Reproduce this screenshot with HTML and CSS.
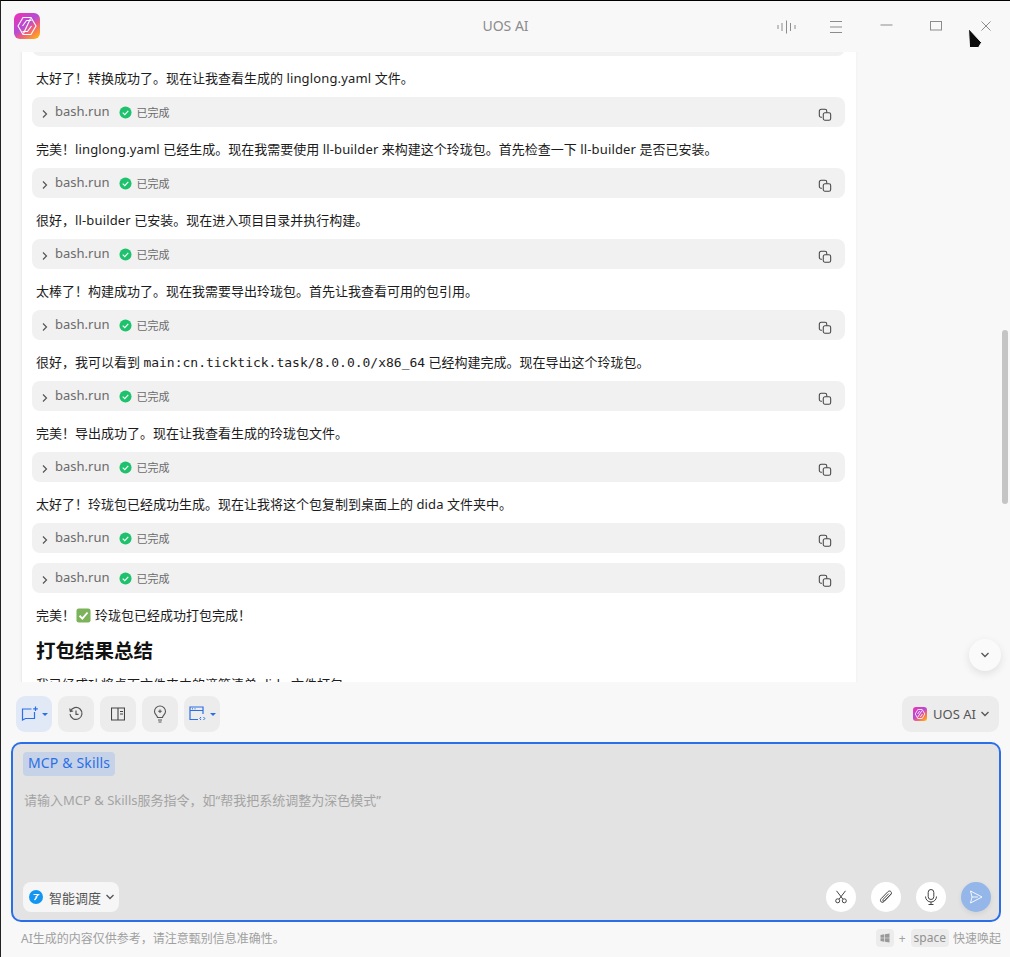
FILE: index.html
```html
<!DOCTYPE html>
<html lang="zh-CN">
<head>
<meta charset="utf-8">
<title>UOS AI</title>
<link rel="stylesheet" href="styles.css">
</head>
<body>
<svg class="sprites" width="0" height="0" aria-hidden="true">
  <defs>
    <symbol id="chev" viewBox="0 0 10 10"><path d="M3 1.500 6.500 5 3 8.500" fill="none" stroke="currentColor" stroke-width="1.200"/></symbol>
    <symbol id="down" viewBox="0 0 10 10"><path d="M1.500 3 5 6.500 8.500 3" fill="none" stroke="currentColor" stroke-width="1.300"/></symbol>
    <symbol id="ok" viewBox="0 0 14 14"><circle cx="7" cy="7" r="6.500" fill="#1fc26c"/><path d="M4 7.200 6.200 9.300 10 5.200" fill="none" stroke="#fff" stroke-width="1.200"/></symbol>
    <symbol id="copy" viewBox="0 0 16 16"><path d="M4.500 10.500H3.500A2 2 0 0 1 1.500 8.500V3.500A2 2 0 0 1 3.500 1.500H8A2 2 0 0 1 10 3.500V5" fill="none" stroke="currentColor" stroke-width="1.200"/><rect x="6" y="5.500" width="8.500" height="8.500" rx="2" fill="none" stroke="currentColor" stroke-width="1.200"/></symbol>
  </defs>
</svg>
<div class="window">
  <header class="titlebar">
    <svg class="logo" viewBox="0 0 26 26" width="26" height="26">
      <defs><linearGradient id="lg" x1="0" y1="0" x2=".8" y2="1"><stop offset="0" stop-color="#f42fb2"/><stop offset=".5" stop-color="#b54cd6"/><stop offset=".68" stop-color="#ee5a82"/><stop offset="1" stop-color="#ffa81a"/></linearGradient></defs>
      <rect width="26" height="26" rx="6" fill="url(#lg)"/>
      <path d="M9 4.500H17L22 13 17 21.500H9L4 13ZM8.500 13 12.500 7.500H17.500M17.500 13 13.500 18.500H8.500M9.500 20.500 16.500 5.500" fill="none" stroke="#fff" stroke-width="1.100" stroke-linejoin="round"/>
    </svg>
    <div class="app-title">UOS AI</div>
    <div class="win-controls">
      <svg class="ctl ctl-wave" viewBox="0 0 20 14" width="20" height="14"><path d="M1 5v4M5 3v8M9.500 .5v13M13.500 3v8M18 5v4" stroke="#8c8c8c" fill="none"/></svg>
      <svg class="ctl ctl-menu" viewBox="0 0 14 12" width="14" height="12"><path d="M1 .5h12M1 6h12M1 11.500h12" stroke="#8c8c8c" fill="none"/></svg>
      <svg class="ctl ctl-min" viewBox="0 0 14 2" width="14" height="2"><path d="M1.500 1h12" stroke="#8c8c8c" fill="none"/></svg>
      <svg class="ctl ctl-max" viewBox="0 0 12 10" width="12" height="10"><rect x=".5" y=".5" width="11" height="8.500" fill="none" stroke="#8c8c8c"/></svg>
      <svg class="ctl ctl-close" viewBox="0 0 10 10" width="10" height="10"><path d="M.5 .5 9.500 9.500M9.500 .5 .5 9.500" stroke="#8c8c8c" fill="none"/></svg>
    </div>
  </header>

  <main class="chat">
    <div class="card">
      <div class="tool tool-first"></div>
      <p class="msg">太好了&#65281;转换成功了。现在让我查看生成的 <span class="lat">linglong.yaml</span> 文件。</p>
      <div class="tool"><svg class="chev"><use href="#chev"/></svg><span class="tool-name">bash.run</span><svg class="ok"><use href="#ok"/></svg><span class="tool-state">已完成</span><svg class="copy"><use href="#copy"/></svg></div>
      <p class="msg">完美&#65281;<span class="lat">linglong.yaml</span> 已经生成。现在我需要使用 <span class="lat">ll-builder</span> 来构建这个玲珑包。首先检查一下 <span class="lat">ll-builder</span> 是否已安装。</p>
      <div class="tool"><svg class="chev"><use href="#chev"/></svg><span class="tool-name">bash.run</span><svg class="ok"><use href="#ok"/></svg><span class="tool-state">已完成</span><svg class="copy"><use href="#copy"/></svg></div>
      <p class="msg">很好&#65292;<span class="lat">ll-builder</span> 已安装。现在进入项目目录并执行构建。</p>
      <div class="tool"><svg class="chev"><use href="#chev"/></svg><span class="tool-name">bash.run</span><svg class="ok"><use href="#ok"/></svg><span class="tool-state">已完成</span><svg class="copy"><use href="#copy"/></svg></div>
      <p class="msg">太棒了&#65281;构建成功了。现在我需要导出玲珑包。首先让我查看可用的包引用。</p>
      <div class="tool"><svg class="chev"><use href="#chev"/></svg><span class="tool-name">bash.run</span><svg class="ok"><use href="#ok"/></svg><span class="tool-state">已完成</span><svg class="copy"><use href="#copy"/></svg></div>
      <p class="msg">很好&#65292;我可以看到 <code>main:cn.ticktick.task/8.0.0.0/x86_64</code> 已经构建完成。现在导出这个玲珑包。</p>
      <div class="tool"><svg class="chev"><use href="#chev"/></svg><span class="tool-name">bash.run</span><svg class="ok"><use href="#ok"/></svg><span class="tool-state">已完成</span><svg class="copy"><use href="#copy"/></svg></div>
      <p class="msg">完美&#65281;导出成功了。现在让我查看生成的玲珑包文件。</p>
      <div class="tool"><svg class="chev"><use href="#chev"/></svg><span class="tool-name">bash.run</span><svg class="ok"><use href="#ok"/></svg><span class="tool-state">已完成</span><svg class="copy"><use href="#copy"/></svg></div>
      <p class="msg">太好了&#65281;玲珑包已经成功生成。现在让我将这个包复制到桌面上的 <span class="lat">dida</span> 文件夹中。</p>
      <div class="tool"><svg class="chev"><use href="#chev"/></svg><span class="tool-name">bash.run</span><svg class="ok"><use href="#ok"/></svg><span class="tool-state">已完成</span><svg class="copy"><use href="#copy"/></svg></div>
      <div class="tool tool-next"><svg class="chev"><use href="#chev"/></svg><span class="tool-name">bash.run</span><svg class="ok"><use href="#ok"/></svg><span class="tool-state">已完成</span><svg class="copy"><use href="#copy"/></svg></div>
      <p class="msg msg-done">完美&#65281;<svg class="emoji" viewBox="0 0 16 16" width="15" height="15"><rect x=".5" y=".5" width="15" height="15" rx="2.500" fill="#7cb35a"/><path d="M3.800 8.300 6.800 11.300 12.300 4.800" fill="none" stroke="#fff" stroke-width="2"/></svg>玲珑包已经成功打包完成&#65281;</p>
      <h2 class="summary">打包结果总结</h2>
      <p class="msg msg-cut">我已经成功将桌面文件夹中的滴答清单 <span class="lat">dida</span> 文件打包。</p>
    </div>
    <div class="scrollbar"></div>
    <button class="to-bottom"><svg width="10" height="10"><use href="#down"/></svg></button>
  </main>

  <div class="toolbar">
    <button class="tbtn tbtn-active">
      <svg viewBox="0 0 18 16" width="18" height="16"><path d="M10.500 3H1.500V14L4.500 12.500H13.500V6M14.500 .5V5M12.200 2.800H16.800" fill="none" stroke="#2b6fe8" stroke-width="1.200"/></svg>
      <i class="caret caret-blue"></i>
    </button>
    <button class="tbtn">
      <svg viewBox="0 0 16 16" width="16" height="16"><path d="M2.400 5.200A6 6 0 1 1 2 8M1.800 2.500 2.400 5.500 5.200 5M8 4.500V8.300L10.500 8.300" fill="none" stroke="#555" stroke-width="1.200"/></svg>
    </button>
    <button class="tbtn">
      <svg viewBox="0 0 14 14" width="14" height="14"><path d="M.5 1H13.500V13H.5ZM7 1V13" fill="none" stroke="#444" stroke-width="1.100"/><path d="M9 4.500H12M9 7H12" stroke="#444"/></svg>
    </button>
    <button class="tbtn">
      <svg viewBox="0 0 14 18" width="14" height="18"><path d="M4.500 12.500C4.500 10.500 1.500 9.500 1.500 6.500A5.500 5.500 0 0 1 12.500 6.500C12.500 9.500 9.500 10.500 9.500 12.500ZM5 15H9M5.500 17H8.500M7 4.500V8M5.200 6.300H8.800" fill="none" stroke="#555" stroke-width="1.100"/></svg>
    </button>
    <button class="tbtn">
      <svg viewBox="0 0 18 16" width="18" height="16"><path d="M9 13.500H1V1H14V8M1 4.500H14" fill="none" stroke="#2b6fe8" stroke-width="1.200"/><path d="M3 2.800H4M5.500 2.800H6.500M12 11 10.800 12.500 12 14M14.500 11 15.800 12.500 14.500 14" fill="none" stroke="#2b6fe8"/></svg>
      <i class="caret caret-blue"></i>
    </button>
    <button class="model">
      <svg class="model-logo" viewBox="0 0 14 14" width="14" height="14"><rect width="14" height="14" rx="3" fill="url(#lg)"/><path d="M4.800 2.500H9.200L11.800 7 9.200 11.500H4.800L2.200 7ZM4.500 10.500 9 3.500M4.600 7 6.700 4M9.400 7 7.300 10" fill="none" stroke="#fff" stroke-width=".8"/></svg>
      <span>UOS AI</span>
      <svg width="10" height="10"><use href="#down"/></svg>
    </button>
  </div>

  <section class="composer">
    <div class="tag-row"><span class="tag">MCP &amp; Skills</span></div>
    <div class="placeholder">请输入MCP &amp; Skills服务指令&#65292;如&#8220;帮我把系统调整为深色模式&#8221;</div>
    <div class="composer-foot">
      <button class="agent">
        <svg viewBox="0 0 14 14" width="14" height="14"><circle cx="7" cy="7" r="7" fill="#1296f2"/><path d="M4.500 4.500H9.500L6.500 7.500M8 7 5.500 10" fill="none" stroke="#fff" stroke-width="1.200"/></svg>
        <span>智能调度</span>
        <svg class="agent-down" width="10" height="10"><use href="#down"/></svg>
      </button>
      <div class="actions">
        <button class="round"><svg viewBox="0 0 14 14" width="14" height="14"><path d="M2.500 .8 8.800 9M11.500 .8 5.200 9" fill="none" stroke="#444"/><circle cx="3.700" cy="10.800" r="2" fill="none" stroke="#444"/><circle cx="10.300" cy="10.800" r="2" fill="none" stroke="#444"/></svg></button>
        <button class="round"><svg viewBox="0 0 14 14" width="14" height="14"><path d="M12.500 3.500 5 11.500C3.800 12.800 2 12.300 1.600 11.200 1.200 10 1.600 9.200 2.300 8.500L8.800 1.800C10 .6 11.400 1 12 1.700 12.700 2.600 12.500 3.700 11.800 4.400L5.500 10.800C4.900 11.300 4.200 11.100 4 10.700 3.700 10.200 3.900 9.700 4.300 9.200L9.800 3.600" fill="none" stroke="#444"/></svg></button>
        <button class="round"><svg viewBox="0 0 14 16" width="14" height="16"><rect x="4.200" y=".5" width="5.600" height="10" rx="2.800" fill="none" stroke="#444"/><path d="M1.500 7.500A5.500 5.500 0 0 0 12.500 7.500M7 13V15.500M4.500 15.500H9.500" fill="none" stroke="#444"/></svg></button>
        <button class="round round-send"><svg viewBox="0 0 14 14" width="14" height="14"><path d="M1.500 1 13 7 1.500 13 3 7ZM3 7H9" fill="none" stroke="#fff" stroke-width=".9"/></svg></button>
      </div>
    </div>
  </section>

  <footer class="footer">
    <span class="disclaimer">AI生成的内容仅供参考&#65292;请注意甄别信息准确性。</span>
    <span class="shortcut">
      <kbd class="key key-win"><svg viewBox="0 0 10 10" width="10" height="10"><path d="M.5 2 4.300 1.300V4.700H.5ZM5 1.200 9.500 .5V4.700H5ZM.5 5.300H4.300V8.700L.5 8ZM5 5.300H9.500V9.500L5 8.800Z" fill="#999"/></svg></kbd>
      <span class="plus">+</span>
      <kbd class="key">space</kbd>
      <span>快速唤起</span>
    </span>
  </footer>
</div>
<svg class="cursor" viewBox="0 0 18 22" width="18" height="22"><path d="M1.500 1.500 14.500 15.500 11.500 20.500H2.500Z" fill="#0c0c0c" stroke="#fff" stroke-width="1"/></svg>
</body>
</html>
```
FILE: styles.css
```css
* { box-sizing: border-box; }
html, body { margin: 0; height: 100%; overflow: hidden; }
body {
  font-family: "Noto Sans", "Noto Sans CJK SC", sans-serif;
  font-size: 13px;
  color: #1c1c1c;
  background: #f8f8f8;
}
button { font: inherit; border: 0; padding: 0; cursor: default; }
.sprites { position: absolute; }

.window {
  display: flex;
  flex-direction: column;
  height: 957px;
  border-top: 1px solid #000;
  border-left: 1px solid #222;
  background: #f8f8f8;
}

.titlebar {
  height: 51px;
  flex: none;
  position: relative;
  display: flex;
  align-items: center;
  padding: 0 0 1px 13px;
}
.logo { flex: none; }
.app-title {
  position: absolute;
  left: 0; right: 0; top: 15px;
  text-align: center;
  font-size: 14px;
  line-height: 20px;
  color: #8c8c8c;
}
.win-controls { position: absolute; inset: 0; }
.ctl { position: absolute; }
.ctl-wave { left: 776px; top: 19px; }
.ctl-menu { left: 828px; top: 20px; }
.ctl-min { left: 878px; top: 23px; }
.ctl-max { left: 929px; top: 20px; }
.ctl-close { left: 980px; top: 20px; }

.chat {
  height: 630px;
  flex: none;
  position: relative;
  overflow: hidden;
  padding-left: 20px;
}
.card {
  width: 835px;
  height: 700px;
  margin-top: -26px;
  padding: 0 11px 0 10px;
  background: #fff;
  border-left: 1px solid #ececec;
  box-shadow: 0 0 3px rgba(0,0,0,.05);
}
.tool {
  height: 30px;
  border-radius: 8px;
  background: #f1f1f1;
  display: flex;
  align-items: center;
  padding: 0 13px 0 8px;
  color: #6b6b6b;
}
.tool-next { margin-top: 10px; }
.chev { width: 10px; height: 10px; flex: none; color: #555; margin-top: 4px; }
.tool-name { margin-left: 5px; line-height: 30px; margin-top: -2px; }
.ok { width: 13px; height: 13px; margin-left: 10px; flex: none; }
.tool-state { margin-left: 4px; font-size: 11px; }
.copy { width: 14px; height: 14px; margin-left: auto; color: #444; margin-top: 5px; flex: none; }
.msg {
  margin: 0 0 8px 4px;
  line-height: 21px;
  height: 21px;
  white-space: nowrap;
}
.tool + .msg { margin-top: 12px; }
.lat { letter-spacing: .15px; }
.msg code { font-family: "DejaVu Sans Mono", monospace; font-size: 13px; }
.msg-done { display: flex; align-items: center; margin-top: 12px; }
.emoji { margin: 0 4px 0 1px; flex: none; }
.summary {
  margin: 12px 0 10px 4px;
  font-size: 19.500px;
  line-height: 26px;
  font-weight: 700;
  color: #111;
}
.msg-cut { margin-top: 0; }

.scrollbar {
  position: absolute;
  left: 1001px;
  top: 278px;
  width: 6px;
  height: 174px;
  border-radius: 3px;
  background: #c4c4c4;
}
.to-bottom {
  position: absolute;
  left: 968px;
  top: 587px;
  width: 32px;
  height: 32px;
  border-radius: 50%;
  background: #fafafa;
  color: #555;
  box-shadow: 0 3px 8px rgba(0,0,0,.1);
  display: flex;
  align-items: center;
  justify-content: center;
}

.toolbar {
  flex: none;
  height: 60px;
  display: flex;
  align-items: center;
  gap: 6px;
  padding: 4px 11px 0 15px;
}
.tbtn {
  width: 36px;
  height: 36px;
  border-radius: 9px;
  background: #ececec;
  display: flex;
  align-items: center;
  justify-content: center;
  gap: 3px;
}
.tbtn-active { background: #e2e9f6; }
.caret {
  width: 0; height: 0;
  border: 3px solid transparent;
  border-top: 3px solid #2b6fe8;
  border-bottom: 0;
}
.model {
  margin-left: auto;
  height: 36px;
  width: 97px;
  border-radius: 9px;
  background: #ececec;
  display: flex;
  align-items: center;
  justify-content: center;
  gap: 6px;
  padding-left: 2px;
  color: #555;
  font-size: 13px;
}
.model span { margin-right: -2px; }

.composer {
  flex: none;
  height: 180px;
  margin: 0 9px 0 10px;
  border: 2px solid #2b6fe8;
  border-radius: 10px;
  background: #e3e3e3;
  padding: 8px 10px 8px 10px;
  display: flex;
  flex-direction: column;
}
.tag-row { height: 24px; display: flex; }
.tag {
  background: #c6d2e7;
  color: #2b6fe8;
  font-size: 14px;
  letter-spacing: .15px;
  line-height: 22px;
  height: 24px;
  padding: 0 5px;
  border-radius: 4px;
}
.placeholder {
  margin: 14px 0 0 1px;
  font-size: 13px;
  line-height: 20px;
  color: #a3a3a3;
}
.composer-foot {
  margin-top: auto;
  display: flex;
  align-items: center;
  justify-content: space-between;
}
.agent {
  height: 30px;
  width: 96px;
  border-radius: 8px;
  background: #f6f6f6;
  display: flex;
  align-items: center;
  gap: 6px;
  padding-left: 6px;
  color: #555;
  font-size: 13px;
}
.agent-down { margin-left: -2px; }
.actions { display: flex; gap: 15px; margin-right: -2px; }
.round {
  width: 30px;
  height: 30px;
  border-radius: 50%;
  background: #fff;
  display: flex;
  align-items: center;
  justify-content: center;
}
.round-send { background: #94b6e8; box-shadow: 0 2px 5px rgba(0,0,0,.08); }

.footer {
  flex: none;
  height: 32px;
  display: flex;
  align-items: center;
  justify-content: space-between;
  padding: 0 9px 0 20px;
  font-size: 12px;
  color: #a0a0a0;
}
.shortcut { display: flex; align-items: center; gap: 4px; }
.key {
  font-family: inherit;
  font-size: 12px;
  height: 18px;
  line-height: 18px;
  padding: 0 3px;
  background: #ececec;
  border-radius: 4px;
  color: #909090;
  display: inline-flex;
  align-items: center;
}
.key-win { width: 18px; justify-content: center; padding: 0; }
.plus { margin: 0 1px; }

.cursor { position: absolute; left: 967px; top: 27px; }
```
